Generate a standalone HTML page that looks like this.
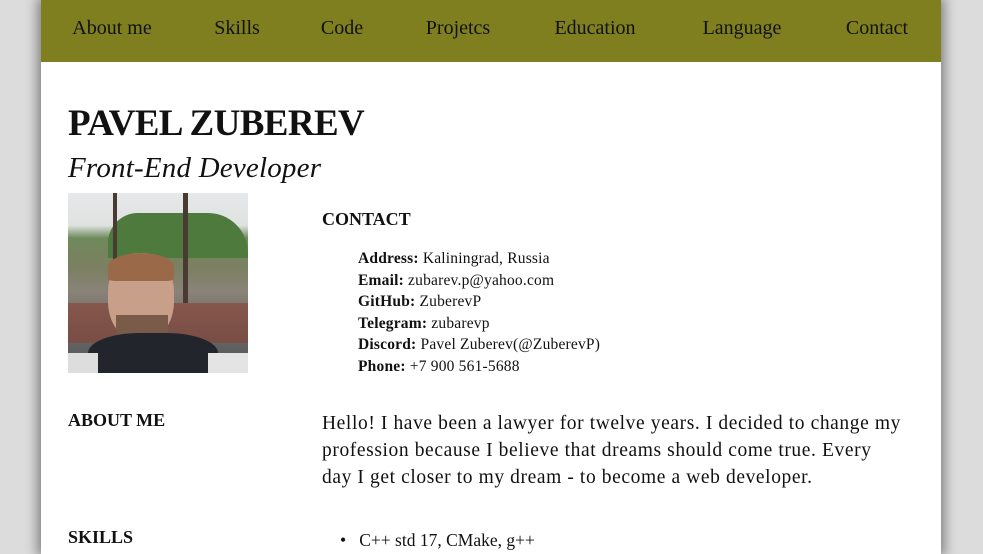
<!DOCTYPE html>
<html><head><meta charset="utf-8"><style>
*{margin:0;padding:0;box-sizing:border-box}
body{width:983px;height:554px;overflow:hidden;background:#dcdcdc;font-family:"Liberation Serif","DejaVu Serif",serif;color:#111;position:relative}
.page{position:absolute;left:41px;top:0;width:900px;height:554px;background:#fff;box-shadow:0 0 12px 3px rgba(0,0,0,.45)}
.nav{position:absolute;left:0;top:0;width:900px;height:62px;background:#7f7f1f}
.nav span{position:absolute;top:17px;font-size:20px;transform:translateX(-50%);white-space:nowrap;color:#111}
.a{position:absolute;white-space:nowrap}
h1{position:absolute;left:27px;top:102px;font-size:37px;font-weight:bold;letter-spacing:-0.6px}
h2{position:absolute;left:27px;top:152px;font-size:29px;font-style:italic;font-weight:normal;letter-spacing:.2px}
.h{font-weight:bold;font-size:18px}
.contact{position:absolute;left:317px;top:248px;font-size:15.5px;line-height:21.6px;letter-spacing:.2px}
.about{position:absolute;left:281px;top:410px;width:620px;font-size:19.5px;line-height:27px;letter-spacing:.6px;white-space:nowrap}
.photo{position:absolute;left:27px;top:193px;width:180px;height:180px;overflow:hidden;
background:linear-gradient(180deg,#e6e8ea 0%,#dfe2e0 18%,#6f8a5c 25%,#7a8060 40%,#8a8278 55%,#6a6a66 75%,#505458 100%)}
</style></head><body>
<div class="page">
<div class="nav">
<span style="left:71px">About me</span>
<span style="left:196px">Skills</span>
<span style="left:301px">Code</span>
<span style="left:417px">Projetcs</span>
<span style="left:554px">Education</span>
<span style="left:701px">Language</span>
<span style="left:836px">Contact</span>
</div>
<h1>PAVEL ZUBEREV</h1>
<h2>Front-End Developer</h2>
<div class="photo">
<div style="position:absolute;left:40px;top:20px;width:140px;height:45px;background:#4f7a3e;border-radius:30px 40px 0 0"></div>
<div style="position:absolute;left:0;top:110px;width:180px;height:40px;background:#8b4034;opacity:.6"></div>
<div style="position:absolute;left:45px;top:0;width:4px;height:120px;background:#4a3a34"></div>
<div style="position:absolute;left:115px;top:0;width:5px;height:110px;background:#4a3a34"></div>
<div style="position:absolute;left:40px;top:60px;width:66px;height:88px;background:#c8a08a;border-radius:45%"></div>
<div style="position:absolute;left:40px;top:60px;width:66px;height:28px;background:#9a6a48;border-radius:50% 50% 10% 10%"></div>
<div style="position:absolute;left:48px;top:122px;width:52px;height:26px;background:#7a5a48;border-radius:0 0 40% 40%"></div>
<div style="position:absolute;left:20px;top:140px;width:130px;height:50px;background:#22262c;border-radius:40% 40% 0 0"></div>
<div style="position:absolute;left:0;top:160px;width:30px;height:20px;background:#ddd"></div>
<div style="position:absolute;left:140px;top:160px;width:40px;height:20px;background:#e4e4e4"></div>
</div>
<div class="a h" style="left:281px;top:209px">CONTACT</div>
<div class="contact">
<div><b>Address:</b> Kaliningrad, Russia</div>
<div><b>Email:</b> zubarev.p@yahoo.com</div>
<div><b>GitHub:</b> ZuberevP</div>
<div><b>Telegram:</b> zubarevp</div>
<div><b>Discord:</b> Pavel Zuberev(@ZuberevP)</div>
<div><b>Phone:</b> +7 900 561-5688</div>
</div>
<div class="a h" style="left:27px;top:410px">ABOUT ME</div>
<div class="about">Hello! I have been a lawyer for twelve years. I decided to change my<br>profession because I believe that dreams should come true. Every<br>day I get closer to my dream - to become a web developer.</div>
<div class="a h" style="left:27px;top:527px">SKILLS</div>
<div class="a" style="left:299px;top:530px;font-size:17.5px">•&nbsp;&nbsp;&nbsp;C++ std 17, CMake, g++</div>
</div>
</body></html>
